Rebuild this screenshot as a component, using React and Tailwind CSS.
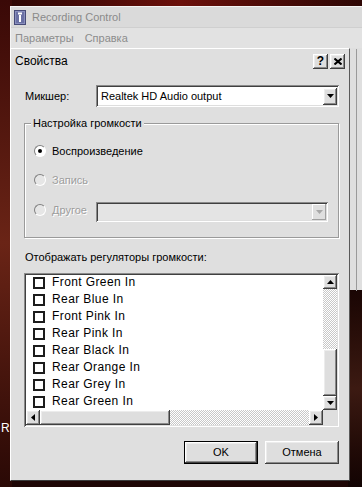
import React from 'react';

const raised =
  'bg-[#dedede] shadow-[inset_-1px_-1px_#404040,inset_1px_1px_#ffffff,inset_-2px_-2px_#8a8a8a,inset_2px_2px_#ececec]';
const sunken =
  'shadow-[inset_1px_1px_#8a8a8a,inset_-1px_-1px_#ffffff,inset_2px_2px_#404040,inset_-2px_-2px_#dedede]';
const checker =
  'bg-[repeating-conic-gradient(#c8c8c8_0_25%,#ffffff_0_50%)] bg-[length:2px_2px]';
const disabledText = 'text-[#9d9d9d] [text-shadow:1px_1px_0_#ffffff]';

const arrowPoints = {
  down: '0,0 7,0 3.5,4',
  up: '3.5,0 7,4 0,4',
  left: '4,0 4,7 0,3.5',
  right: '0,0 4,3.5 0,7',
};

const Arrow = ({ dir = 'down', color = '#000' }) => {
  const vertical = dir === 'up' || dir === 'down';
  const w = vertical ? 7 : 4;
  const h = vertical ? 4 : 7;
  return (
    <svg width={w} height={h} viewBox={`0 0 ${w} ${h}`}>
      <polygon points={arrowPoints[dir]} fill={color} />
    </svg>
  );
};

const ScrollBtn = ({ dir, className = 'w-[14px] h-[14px]' }) => (
  <div className={`${raised} ${className} flex items-center justify-center shrink-0`}>
    <Arrow dir={dir} />
  </div>
);

const Radio = ({ checked, disabled }) => (
  <div
    className={`w-[12px] h-[12px] rounded-full border border-t-[#808080] border-l-[#808080] border-b-[#ffffff] border-r-[#ffffff] flex items-center justify-center ${
      disabled ? 'bg-[#e6e6e6]' : 'bg-white'
    }`}
  >
    {checked && <div className="w-[4px] h-[4px] rounded-full bg-black" />}
  </div>
);

const items = [
  'Front Green In',
  'Rear Blue In',
  'Front Pink In',
  'Rear Pink In',
  'Rear Black In',
  'Rear Orange In',
  'Rear Grey In',
  'Rear Green In',
];

export default function App() {
  return (
    <div className="relative w-[362px] h-[487px] overflow-hidden bg-[#1e0605] font-['Liberation_Sans',Arial,sans-serif] text-[11px] leading-[13px] text-black">
      {/* desktop */}
      <div className="absolute inset-x-0 top-0 h-[8px] bg-gradient-to-r from-[#2a0604] via-[#6b100b] to-[#2e0705]" />
      <div className="absolute left-0 top-0 h-full w-[12px] bg-gradient-to-b from-[#3a0907] via-[#6a2416] to-[#2a0906]" />
      <div className="absolute right-0 top-[290px] w-[14px] h-[197px] bg-gradient-to-b from-[#1a0604] via-[#3c1a12] to-[#120403]" />
      <span className="absolute left-[1px] top-[422px] text-[12px] text-white">Rec</span>

      {/* back window */}
      <div className="absolute left-[10px] top-[6px] w-[352px] h-[284px] bg-[#dfdfdf] border-l border-t border-[#f4f4f4]">
        <div className="h-[21px] flex items-center gap-[6px] pl-[3px] bg-[#dadada] border-b border-[#cfcfcf]">
          <svg width="12" height="15" viewBox="0 0 12 15">
            <rect x="0.5" y="0.5" width="11" height="14" fill="#8a90bf" stroke="#474b78" />
            <rect x="2" y="2" width="8" height="11" fill="#6a70a4" />
            <rect x="4" y="2.5" width="4" height="2" fill="#ffffff" />
            <rect x="5" y="5" width="2" height="7" fill="#ffffff" />
          </svg>
          <span className="text-[#8a8a8a]">Recording Control</span>
        </div>
        <div className="h-[20px] flex items-center gap-[11px] pl-[4px] bg-[#e2e2e2] text-[#8c8c8c]">
          <span>Параметры</span>
          <span>Справка</span>
        </div>
        <div className="absolute left-[345px] top-[42px] h-[242px] border-l border-[#9a9a9a]" />
      </div>

      {/* dialog */}
      <div className="absolute left-[10px] top-[48px] w-[340px] h-[433px] flex flex-col bg-[#dfdfdf] border-t border-l border-[#ffffff] border-r border-b border-r-[#5a5a5a] border-b-[#3a3a3a]">
        {/* title bar */}
        <div className="h-[24px] shrink-0 flex items-center justify-between pl-[4px] pr-[4px]">
          <span className="text-[12px]">Свойства</span>
          <div className="flex gap-[2px]">
            <div className={`${raised} w-[15px] h-[15px] flex items-center justify-center text-[12px] font-bold`}>?</div>
            <div className={`${raised} w-[15px] h-[15px] flex items-center justify-center`}>
              <svg width="8" height="7" viewBox="0 0 8 7">
                <path d="M0.5 0.5 L7.5 6.5 M7.5 0.5 L0.5 6.5" stroke="#000" strokeWidth="2" />
              </svg>
            </div>
          </div>
        </div>

        <div className="flex flex-col pl-[13px] pr-[10px]">
          {/* mixer */}
          <div className="mt-[12px] h-[22px] flex items-center">
            <span className="w-[72px] pl-[1px]">Микшер:</span>
            <div className={`flex-1 h-[22px] bg-white ${sunken} flex items-center justify-between pl-[5px] pr-[2px]`}>
              <span>Realtek HD Audio output</span>
              <ScrollBtn dir="down" className="w-[14px] h-[17px]" />
            </div>
          </div>

          {/* group */}
          <div className="relative mt-[16px] h-[115px] border border-[#9a9a9a] shadow-[inset_1px_1px_#ffffff,1px_1px_#ffffff] pl-[9px] pt-[17px]">
            <span className="absolute -top-[7px] left-[6px] px-[2px] bg-[#dfdfdf]">Настройка громкости</span>
            <div className="h-[20px] flex items-center gap-[6px]">
              <Radio checked />
              <span>Воспроизведение</span>
            </div>
            <div className="mt-[9px] h-[20px] flex items-center gap-[6px]">
              <Radio disabled />
              <span className={disabledText}>Запись</span>
            </div>
            <div className="mt-[10px] h-[20px] flex items-center">
              <div className="w-[62px] flex items-center gap-[6px]">
                <Radio disabled />
                <span className={disabledText}>Другое</span>
              </div>
              <div className={`mt-[3px] w-[232px] h-[20px] bg-[#e4e4e4] ${sunken} flex items-center justify-end pr-[2px]`}>
                <div className="w-[14px] h-[16px] bg-[#dfdfdf] shadow-[inset_-1px_-1px_#a0a0a0,inset_1px_1px_#ffffff] flex items-center justify-center">
                  <Arrow dir="down" color="#a8a8a8" />
                </div>
              </div>
            </div>
          </div>

          <span className="mt-[13px] pl-[1px]">Отображать регуляторы громкости:</span>

          {/* list */}
          <div className={`mt-[9px] h-[154px] bg-white ${sunken} p-[2px] flex`}>
            <div className="flex-1 flex flex-col min-w-0">
              <div className="flex-1 overflow-hidden">
                <div className="-mt-[1px]">
                  {items.map((t) => (
                    <div key={t} className="h-[17px] flex items-center pl-[7px] gap-[7px]">
                      <div className="w-[12px] h-[12px] border-2 border-[#1c1c1c] bg-white shrink-0" />
                      <span className="text-[12px] tracking-[0.4px]">{t}</span>
                    </div>
                  ))}
                </div>
              </div>
              <div className="h-[15px] flex">
                <ScrollBtn dir="left" className="w-[14px] h-[15px]" />
                <div className={`${raised} w-[130px] h-[15px]`} />
                <div className={`flex-1 ${checker}`} />
                <ScrollBtn dir="right" className="w-[14px] h-[15px]" />
              </div>
            </div>
            <div className="w-[14px] flex flex-col">
              <ScrollBtn dir="up" />
              <div className={`h-[60px] ${checker}`} />
              <div className={`${raised} h-[47px]`} />
              <ScrollBtn dir="down" />
              <div className="flex-1 bg-[#dfdfdf]" />
            </div>
          </div>

          {/* buttons */}
          <div className="mt-[14px] flex justify-end gap-[7px]">
            <div className="w-[74px] h-[23px] border border-black">
              <div className={`${raised} w-full h-full flex items-center justify-center`}>OK</div>
            </div>
            <div className={`${raised} w-[74px] h-[23px] flex items-center justify-center`}>Отмена</div>
          </div>
        </div>
      </div>
    </div>
  );
}
